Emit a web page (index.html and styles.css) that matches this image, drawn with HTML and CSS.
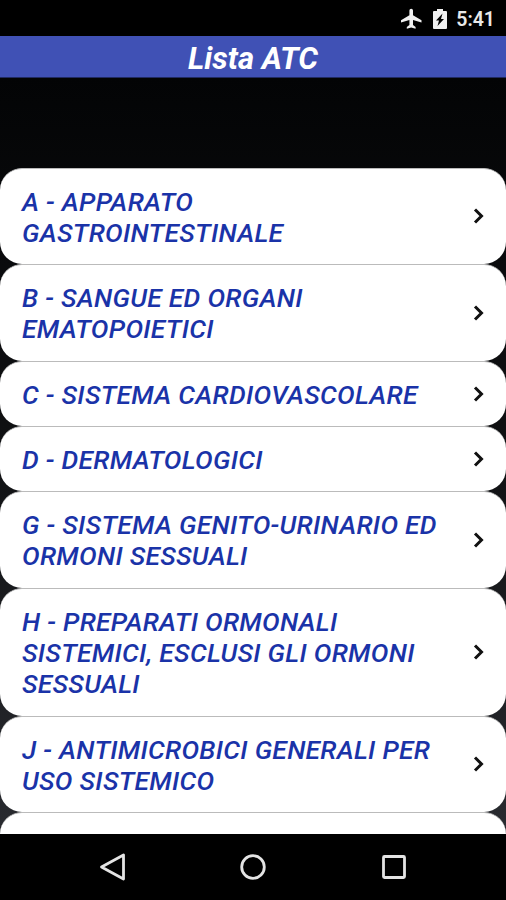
FILE: index.html
```
<!DOCTYPE html>
<html lang="it">
<head>
	<meta charset="utf-8">
	<title>Lista ATC</title>
	<meta name="viewport" content="width=device-width, initial-scale=1">
	<link rel="stylesheet" href="styles.css">
</head>
<body>
	<div class="status">
		<svg class="plane" viewBox="0 0 22 22"><path d="M21.500 14.500v-2.300l-8.500-5V2.500a1.800 1.800 0 0 0-3.600 0v4.700L1 12.200v2.300l8.400-2.500v5L6.800 19v1.800l4.400-1.200 4.400 1.200V19L13 17v-5z"/></svg>
		<svg class="battery" viewBox="0 0 14 20"><path fill-rule="evenodd" d="M4 0h6v2h3Q14 2 14 3v16Q14 20 13 20H1Q0 20 0 19V3Q0 2 1 2h3zM9.500 4.500L3 11.500h3L4.500 17 11 10H8z"/></svg>
		<span class="clock">5:41</span>
	</div>
	<header>Lista ATC</header>

	<main>
		<ul class="list">
			<li><span>A - APPARATO<br>GASTROINTESTINALE</span><svg class="arrow" viewBox="0 0 12 18"><path d="M2 2.500L8.500 9 2 15.500"/></svg></li>
			<li><span>B - SANGUE ED ORGANI<br>EMATOPOIETICI</span><svg class="arrow" viewBox="0 0 12 18"><path d="M2 2.500L8.500 9 2 15.500"/></svg></li>
			<li><span>C - SISTEMA CARDIOVASCOLARE</span><svg class="arrow" viewBox="0 0 12 18"><path d="M2 2.500L8.500 9 2 15.500"/></svg></li>
			<li><span>D - DERMATOLOGICI</span><svg class="arrow" viewBox="0 0 12 18"><path d="M2 2.500L8.500 9 2 15.500"/></svg></li>
			<li><span>G - SISTEMA GENITO-URINARIO ED<br>ORMONI SESSUALI</span><svg class="arrow" viewBox="0 0 12 18"><path d="M2 2.500L8.500 9 2 15.500"/></svg></li>
			<li><span>H - PREPARATI ORMONALI<br>SISTEMICI, ESCLUSI GLI ORMONI<br>SESSUALI</span><svg class="arrow" viewBox="0 0 12 18"><path d="M2 2.500L8.500 9 2 15.500"/></svg></li>
			<li><span>J - ANTIMICROBICI GENERALI PER<br>USO SISTEMICO</span><svg class="arrow" viewBox="0 0 12 18"><path d="M2 2.500L8.500 9 2 15.500"/></svg></li>
			<li class="next"></li>
		</ul>
	</main>

	<!-- android buttons -->
	<nav>
		<svg viewBox="0 0 28 28"><path d="M24.500 2v24L2.500 14z"/></svg>
		<svg viewBox="0 0 28 28"><circle cx="14" cy="14" r="11.300"/></svg>
		<svg viewBox="0 0 28 28"><rect x="3.500" y="3.500" width="21" height="21" rx="1"/></svg>
	</nav>
</body>
</html>
```
FILE: styles.css
```
body {
	margin: 0;
	height: 900px;
	display: flex;
	flex-direction: column;
	overflow: hidden;
	background: #000;
	font-family: Roboto, sans-serif;
}

.status {
	height: 36px;
	box-sizing: border-box;
	padding: 1px 11px 0 0;
	display: flex;
	justify-content: flex-end;
	align-items: center;
	color: #e8e8e8;
}
.status svg {
	fill: #f0f0f0;
}
.plane {
	width: 22px;
	height: 22px;
	margin-right: 11px;
}
.battery {
	width: 14px;
	height: 20px;
	margin-right: 9px;
}
.clock {
	font-size: 19.500px;
	line-height: 22px;
	padding-top: 2px;
	font-weight: 600;
}

header {
	height: 41.500px;
	line-height: 45px;
	background: #4051b5;
	border-bottom: 1px solid #202a60;
	box-sizing: border-box;
	color: #fff;
	font-size: 31px;
	font-weight: 700;
	font-style: italic;
	text-align: center;
}

main {
	flex: 1;
	min-height: 0;
	overflow: hidden;
	padding-top: 90px;
	background: linear-gradient(#030405, #0a0b0d 25%, #101113 50%, #292b30);
}
.list {
	list-style: none;
	margin: 0;
	padding: 0;
}
.list li {
	display: flex;
	justify-content: space-between;
	align-items: center;
	box-sizing: border-box;
	padding: 18px 21px 14.900px 22px;
	border-top: 1px solid #bbb;
	border-radius: 22px;
	background: #fff;
	color: #1a33a8;
	font-size: 26.400px;
	line-height: 31.350px;
	letter-spacing: .29px;
	font-weight: 550;
	font-style: italic;
	white-space: nowrap;
}
.list .next {
	height: 60px;
}
.arrow {
	width: 12px;
	height: 18px;
	flex: none;
	margin-bottom: 3px;
	fill: none;
	stroke: #111;
	stroke-width: 3;
}

nav {
	height: 66px;
	flex: none;
	display: flex;
	justify-content: center;
	align-items: center;
	gap: 112.500px;
	background: #000;
}
nav svg {
	width: 28px;
	height: 28px;
	fill: none;
	stroke: #e4e4e4;
	stroke-width: 2.800;
	stroke-linejoin: round;
}
```
